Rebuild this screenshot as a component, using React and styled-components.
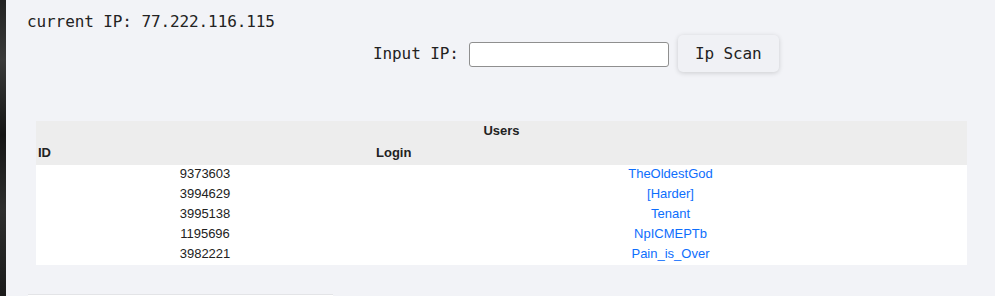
import React from "react";
import styled, { createGlobalStyle } from "styled-components";

const users = [
  { id: 9373603, login: "TheOldestGod" },
  { id: 3994629, login: "[Harder]" },
  { id: 3995138, login: "Tenant" },
  { id: 1195696, login: "NpICMEPTb" },
  { id: 3982221, login: "Pain_is_Over" },
];

const GlobalStyle = createGlobalStyle`
  html, body {
    margin: 0;
    padding: 0;
    background: #f2f3f7;
  }
  body {
    font-family: "DejaVu Sans Mono", "Liberation Mono", monospace;
  }
`;

function App() {
  return (
    <Page>
      <GlobalStyle />
      <Strip />
      <Main>
        <CurrentIp>current IP: 77.222.116.115</CurrentIp>
        <ScanRow>
          <Label htmlFor="ip">Input IP:</Label>
          <IpInput id="ip" type="text" />
          <ScanButton>Ip Scan</ScanButton>
        </ScanRow>
        <Table>
          <colgroup>
            <col style={{ width: 338 }} />
            <col />
          </colgroup>
          <thead>
            <tr>
              <Caption colSpan={2}>Users</Caption>
            </tr>
            <tr>
              <Th>ID</Th>
              <Th>Login</Th>
            </tr>
          </thead>
          <tbody>
            {users.map((u) => (
              <tr key={u.id}>
                <Td>{u.id}</Td>
                <Td>
                  <UserLink href="#">{u.login}</UserLink>
                </Td>
              </tr>
            ))}
          </tbody>
        </Table>
        <NextPanel />
      </Main>
    </Page>
  );
}

const Page = styled.div`
  display: flex;
  min-height: 296px;
  overflow: hidden;
`;

const Strip = styled.div`
  flex: 0 0 6px;
  background: linear-gradient(180deg, #222 0%, #3a3a3a 20%, #151515 45%, #2e2e2e 70%, #1a1a1a 100%);
`;

const Main = styled.div`
  flex: 1;
  padding: 12px 28px 0 21px;
`;

const CurrentIp = styled.div`
  font-size: 16px;
  line-height: 20px;
  letter-spacing: -0.1px;
  color: #222;
`;

const ScanRow = styled.div`
  display: flex;
  align-items: center;
  margin-top: 3px;
  padding-left: 346px;
  height: 37px;
`;

const Label = styled.label`
  font-size: 16px;
  letter-spacing: -0.1px;
  color: #222;
  margin-right: 10px;
`;

const IpInput = styled.input`
  box-sizing: border-box;
  width: 200px;
  height: 25px;
  border: 1px solid #8f8f8f;
  border-radius: 3px;
  background: #fff;
  margin-right: 9px;
  margin-top: 1px;
`;

const ScanButton = styled.button`
  height: 37px;
  width: 101px;
  border: none;
  border-radius: 5px;
  background: #f0f1f5;
  box-shadow: 0 1px 5px rgba(0, 0, 0, 0.16);
  font-family: "DejaVu Sans Mono", "Liberation Mono", monospace;
  font-size: 16px;
  letter-spacing: -0.1px;
  color: #222;
`;

const Table = styled.table`
  margin-top: 49px;
  margin-left: 9px;
  width: 931px;
  border-collapse: collapse;
  font-family: "Liberation Sans", Arial, sans-serif;
  font-size: 13px;
  table-layout: fixed;

  thead {
    background: #ededed;
  }
  tbody {
    background: #fff;
  }
`;

const Caption = styled.th`
  height: 18px;
  padding: 0 1px 4px;
  text-align: center;
  font-weight: bold;
  color: #222;
`;

const Th = styled.th`
  height: 18px;
  padding: 0 2px 4px;
  text-align: left;
  font-weight: bold;
  color: #222;
`;

const Td = styled.td`
  height: 17px;
  padding: 0 0 3px;
  text-align: center;
  color: #222;
`;

const UserLink = styled.a`
  color: #0d6efd;
  text-decoration: none;
`;

const NextPanel = styled.div`
  margin-top: 29px;
  margin-left: 1px;
  width: 305px;
  height: 4px;
  background: #fff;
  border-top: 1px solid #e3e4e7;
`;

export default App;
